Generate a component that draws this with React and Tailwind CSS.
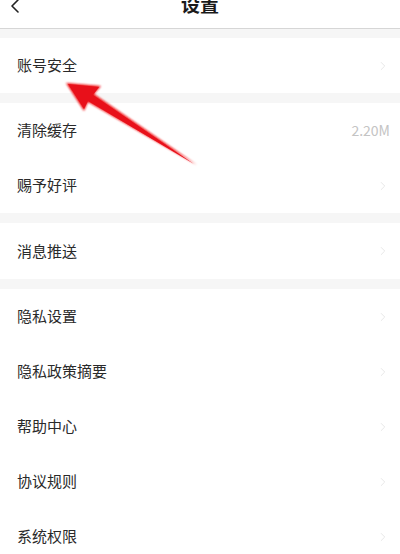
import React from 'react';
import { ChevronLeft, ChevronRight } from 'lucide-react';

const groups = [
  [{ label: '账号安全' }],
  [{ label: '清除缓存', value: '2.20M' }, { label: '赐予好评' }],
  [{ label: '消息推送', tall: true }],
  [
    { label: '隐私设置' },
    { label: '隐私政策摘要' },
    { label: '帮助中心' },
    { label: '协议规则' },
    { label: '系统权限' },
  ],
];

function Row({ item }) {
  return (
    <div
      className={`flex items-center justify-between bg-white pl-[17px] pr-[10px] ${
        item.tall ? 'h-[56px]' : 'h-[55px]'
      }`}
    >
      <span className="text-[15px] text-[#2a2a2a]">{item.label}</span>
      {item.value ? (
        <span className="text-[14px] text-[#c4c4c4]">{item.value}</span>
      ) : (
        <ChevronRight size={14} strokeWidth={1.5} className="text-[#e4e4e4]" />
      )}
    </div>
  );
}

export default function App() {
  return (
    <div
      className="relative w-[400px] h-[554px] overflow-hidden bg-[#f6f6f6]"
      style={{ fontFamily: '"Noto Sans CJK SC", "Noto Sans", sans-serif' }}
    >
      {/* header, top edge cut off by the screenshot */}
      <div className="relative h-[29px] bg-white border-b border-[#d6d6d6] overflow-hidden">
        <ChevronLeft
          size={24}
          strokeWidth={1.6}
          className="absolute left-[3px] -top-[6px] text-[#222]"
        />
        <div className="-mt-[9px] text-center text-[19px] font-bold leading-[26px] text-[#1a1a1a]">
          设置
        </div>
      </div>

      <div className="flex flex-col gap-[10px] pt-[9px]">
        {groups.map((g, i) => (
          <div key={i} className="flex flex-col bg-white">
            {g.map((item) => (
              <Row key={item.label} item={item} />
            ))}
          </div>
        ))}
      </div>

      {/* red pointer arrow */}
      <svg
        className="absolute left-0 top-0 pointer-events-none"
        width="400"
        height="554"
        viewBox="0 0 400 554"
      >
        <defs>
          <filter id="glow" x="-20%" y="-20%" width="140%" height="140%">
            <feGaussianBlur stdDeviation="0.8" />
          </filter>
        </defs>
        <polygon
          points="66,83 101,86 94,94 197,165 88,102 84,111"
          fill="#f01419"
          filter="url(#glow)"
        />
        <polygon
          points="68,84 99,87 93,95 194,164 88,101 84,109"
          fill="#e8101a"
        />
      </svg>
    </div>
  );
}
